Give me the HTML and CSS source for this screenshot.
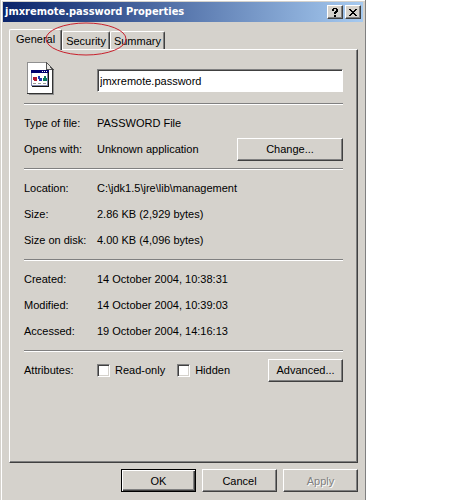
FILE: index.html
```
<!DOCTYPE html>
<html lang="en">
<head>
  <meta charset="UTF-8">
  <meta name="viewport" content="width=device-width, initial-scale=1.0">
  <title>jmxremote.password Properties</title>
  <link rel="stylesheet" href="styles.css">
</head>
<body>
  <main class="dialog">
    <header class="title-bar">
      <h1 class="title-text">jmxremote.password Properties</h1>
      <button class="title-button" aria-label="Help">
        <svg width="6" height="9" viewBox="0 0 6 9" shape-rendering="crispEdges">
          <path d="M1 0h4v1h1v3h-1v1h-1v1h-2v-2h1v-1h1v-2h-2v2h-2v-2h1zM2 7h2v2h-2z"/>
        </svg>
      </button>
      <button class="title-button close" aria-label="Close">
        <svg width="8" height="7" viewBox="0 0 8 7" shape-rendering="crispEdges">
          <path d="M0 0h2v1h1v1h2v-1h1v-1h2v1h-1v1h-1v1h-1v1h1v1h1v1h1v1h-2v-1h-1v-1h-2v1h-1v1h-2v-1h1v-1h1v-1h1v-1h-1v-1h-1v-1h-1z"/>
        </svg>
      </button>
    </header>

    <div class="dialog-body">
      <nav class="tabs" role="tablist">
        <button class="tab active" role="tab" aria-selected="true">General</button>
        <button class="tab" role="tab" aria-selected="false">Security
          <svg class="highlight" width="82" height="35" viewBox="0 0 82 35">
            <ellipse cx="41" cy="17" rx="40" ry="16"/>
          </svg>
        </button>
        <button class="tab" role="tab" aria-selected="false">Summary</button>
      </nav>

      <section class="panel" role="tabpanel">
        <div class="file-header">
          <svg class="file-icon" width="27" height="33" viewBox="0 0 27 33" shape-rendering="crispEdges">
            <path d="M0 0h19l7 7v25h-26z" fill="#fff"/>
            <path d="M0.500 32v-31.500h19" fill="none" stroke="#909090"/>
            <path d="M19.500 0.500v6.500h6z" fill="#e8e6e2" stroke="#555"/>
            <path d="M25.500 7v25" fill="none" stroke="#333"/>
            <path d="M0 31.500h26" stroke="#333"/>
            <path d="M26.500 8v24.500h-25" fill="none" stroke="#909090"/>
            <path d="M4.500 8.500h16v15h-16z" fill="#fff" stroke="#8088b0"/>
            <path d="M4 8h18v3h-18z" fill="#000070"/>
            <path d="M15 9h1v1h-1zM17 9h1v1h-1zM19 9h1v1h-1z" fill="#fff"/>
            <path d="M21.500 10v14.500h-17" fill="none" stroke="#111"/>
            <path d="M6 15h4v4h-3v-1h-1z" fill="#b01830"/>
            <path d="M11 14h2v2h2v3h-3v-2h-1z" fill="#2038b0"/>
            <path d="M17 14h2v2h1v3h-4v-3h1z" fill="#087858"/>
            <path d="M6 21h3v1h-3zM11 21h3v1h-3zM16 21h3v1h-3z" fill="#999"/>
          </svg>
          <input class="file-name" type="text" value="jmxremote.password" aria-label="File name">
        </div>

        <dl class="group">
          <div class="row"><dt>Type of file:</dt><dd>PASSWORD File</dd></div>
          <div class="row">
            <dt>Opens with:</dt>
            <dd>Unknown application</dd>
            <dd class="row-action"><button class="button wide">Change...</button></dd>
          </div>
        </dl>

        <dl class="group">
          <div class="row"><dt>Location:</dt><dd>C:\jdk1.5\jre\lib\management</dd></div>
          <div class="row"><dt>Size:</dt><dd>2.86 KB (2,929 bytes)</dd></div>
          <div class="row"><dt>Size on disk:</dt><dd>4.00 KB (4,096 bytes)</dd></div>
        </dl>

        <dl class="group">
          <div class="row"><dt>Created:</dt><dd>14 October 2004, 10:38:31</dd></div>
          <div class="row"><dt>Modified:</dt><dd>14 October 2004, 10:39:03</dd></div>
          <div class="row"><dt>Accessed:</dt><dd>19 October 2004, 14:16:13</dd></div>
        </dl>

        <dl class="group">
          <div class="row">
            <dt>Attributes:</dt>
            <dd class="checks">
              <label class="check"><input type="checkbox">Read-only</label>
              <label class="check"><input type="checkbox">Hidden</label>
            </dd>
            <dd class="row-action"><button class="button">Advanced...</button></dd>
          </div>
        </dl>
      </section>

      <footer class="actions">
        <button class="button default">OK</button>
        <button class="button">Cancel</button>
        <button class="button" disabled>Apply</button>
      </footer>
    </div>
  </main>
</body>
</html>
```

FILE: styles.css
```
:root {
  --face: #d5d2cc;
  --light: #ffffff;
  --shadow: #808080;
  --dark: #404040;
}

* {
  margin: 0;
  padding: 0;
  box-sizing: border-box;
}

body {
  background: #fff;
  color: #000;
  font-family: "Liberation Sans", Arial, sans-serif;
  font-size: 11px;
  line-height: 14px;
}

button,
input {
  font: inherit;
  color: inherit;
}

.dialog {
  width: 100%;
  max-width: 366px;
  min-height: 100vh;
  padding: 2px;
  background: var(--face);
  border-left: 1px solid var(--face);
  border-right: 1px solid var(--shadow);
  box-shadow: inset 1px 1px var(--light);
}

/* Title bar */
.title-bar {
  display: flex;
  align-items: center;
  height: 20px;
  padding: 0 2px;
  background: linear-gradient(to right, #0a246a, #a6caf0);
}

.title-text {
  flex: 1;
  color: #fff;
  font-family: "DejaVu Sans Condensed", "DejaVu Sans", sans-serif;
  font-size: 11px;
  font-weight: bold;
}

.title-button {
  display: flex;
  align-items: center;
  justify-content: center;
  width: 16px;
  height: 14px;
  background: var(--face);
  border: 1px solid;
  border-color: var(--light) var(--dark) var(--dark) var(--light);
  box-shadow: inset -1px -1px var(--shadow);
}

.title-button.close {
  margin-left: 2px;
}

.dialog-body {
  padding: 7px 5px 8px 6px;
}

/* Tabs */
.tabs {
  display: flex;
  align-items: flex-end;
}

.tab {
  position: relative;
  height: 18px;
  padding: 0 3px;
  background: var(--face);
  border: 1px solid;
  border-color: var(--light) var(--dark) transparent var(--light);
  border-bottom: none;
  border-radius: 2px 2px 0 0;
  box-shadow: inset -1px 0 var(--shadow);
}

.tab.active {
  z-index: 1;
  height: 21px;
  margin-bottom: -1px;
  padding: 0 6px 3px;
}

.highlight {
  position: absolute;
  z-index: 2;
  top: -10px;
  left: -18px;
  fill: none;
  stroke: #c8202c;
  pointer-events: none;
}

.tab:has(.highlight) {
  z-index: 2;
}

.panel {
  min-height: 414px;
  padding: 0 14px;
  border: 1px solid;
  border-color: var(--light) var(--dark) var(--dark) var(--light);
  box-shadow: inset -1px -1px var(--shadow);
}

.file-header {
  display: flex;
  align-items: flex-start;
  height: 53px;
  padding: 12px 0 0 3px;
}

.file-icon {
  margin-right: 43px;
}

.file-name {
  flex: 1;
  min-width: 0;
  height: 23px;
  margin-top: 7px;
  padding: 0 2px;
  background: #fff;
  border: 1px solid;
  border-color: var(--shadow) var(--light) var(--light) var(--shadow);
  box-shadow: inset 1px 1px var(--dark);
}

/* Property groups */
.group {
  padding: 6px 0;
  border-top: 1px solid var(--shadow);
  box-shadow: inset 0 1px var(--light);
}

.row {
  display: flex;
  align-items: center;
  height: 26px;
}

.row dt {
  width: 73px;
}

.row-action {
  margin-left: auto;
}

.checks {
  display: flex;
  gap: 12px;
}

.check {
  display: flex;
  align-items: center;
  gap: 5px;
}

.check input {
  appearance: none;
  width: 13px;
  height: 13px;
  background: #fff;
  border: 1px solid;
  border-color: var(--shadow) var(--light) var(--light) var(--shadow);
  box-shadow: inset 1px 1px var(--dark), inset -1px -1px var(--face);
}

/* Push buttons */
.button {
  display: block;
  width: 75px;
  height: 23px;
  background: var(--face);
  border: 1px solid;
  border-color: var(--light) var(--dark) var(--dark) var(--light);
  box-shadow: inset -1px -1px var(--shadow);
}

.button.wide {
  width: 106px;
}

.button.default {
  border-color: #000;
  box-shadow: inset 1px 1px var(--light), inset -1px -1px var(--dark), inset -2px -2px var(--shadow);
}

.button:disabled {
  color: var(--shadow);
  text-shadow: 1px 1px var(--light);
}

.actions {
  display: flex;
  justify-content: flex-end;
  gap: 6px;
  margin-top: 6px;
}
```
